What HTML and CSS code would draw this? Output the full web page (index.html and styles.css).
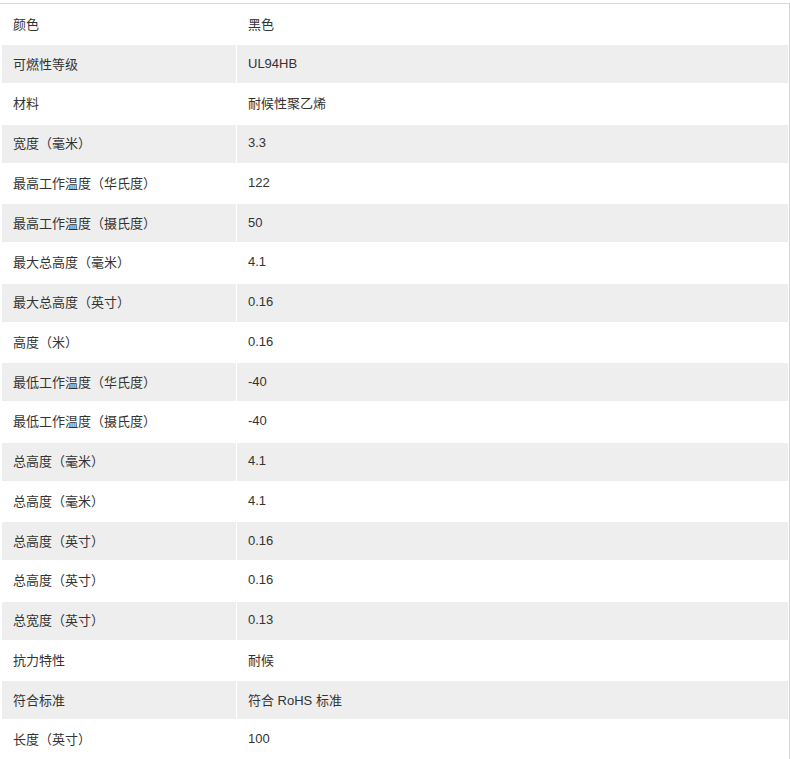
FILE: index.html
```html
<!DOCTYPE html>
<html lang="zh-CN">
<head>
<meta charset="utf-8">
<title>规格参数</title>
<link rel="stylesheet" href="styles.css">
</head>
<body>
<div class="sheet">
  <div class="row"><div class="cell">颜色</div><div class="cell">黑色</div></div>
  <div class="row"><div class="cell">可燃性等级</div><div class="cell">UL94HB</div></div>
  <div class="row"><div class="cell">材料</div><div class="cell">耐候性聚乙烯</div></div>
  <div class="row"><div class="cell">宽度（毫米）</div><div class="cell">3.3</div></div>
  <div class="row"><div class="cell">最高工作温度（华氏度）</div><div class="cell">122</div></div>
  <div class="row"><div class="cell">最高工作温度（摄氏度）</div><div class="cell">50</div></div>
  <div class="row"><div class="cell">最大总高度（毫米）</div><div class="cell">4.1</div></div>
  <div class="row"><div class="cell">最大总高度（英寸）</div><div class="cell">0.16</div></div>
  <div class="row"><div class="cell">高度（米）</div><div class="cell">0.16</div></div>
  <div class="row"><div class="cell">最低工作温度（华氏度）</div><div class="cell">-40</div></div>
  <div class="row"><div class="cell">最低工作温度（摄氏度）</div><div class="cell">-40</div></div>
  <div class="row"><div class="cell">总高度（毫米）</div><div class="cell">4.1</div></div>
  <div class="row"><div class="cell">总高度（毫米）</div><div class="cell">4.1</div></div>
  <div class="row"><div class="cell">总高度（英寸）</div><div class="cell">0.16</div></div>
  <div class="row"><div class="cell">总高度（英寸）</div><div class="cell">0.16</div></div>
  <div class="row"><div class="cell">总宽度（英寸）</div><div class="cell">0.13</div></div>
  <div class="row"><div class="cell">抗力特性</div><div class="cell">耐候</div></div>
  <div class="row"><div class="cell">符合标准</div><div class="cell">符合 RoHS 标准</div></div>
  <div class="row"><div class="cell">长度（英寸）</div><div class="cell">100</div></div>
</div>
</body>
</html>
```
FILE: styles.css
```css
html, body {
  margin: 0;
  padding: 0;
  background: #fff;
}
body {
  font-family: "Liberation Sans", Arial, "Noto Sans CJK SC", sans-serif;
  font-size: 13px;
  color: #333;
  overflow: hidden;
  text-spacing-trim: space-all;
}
.sheet {
  margin-top: 3px;
  width: 790px;
  box-sizing: border-box;
  border-top: 1px solid #d9d9d9;
  border-right: 1px solid #d4d4d4;
  padding: 1.25px 1.3px 0 2px;
  display: flex;
  flex-direction: column;
  gap: 1.75px;
}
.row {
  display: grid;
  grid-template-columns: 234px 1fr;
  column-gap: 1px;
  height: 38px;
}
.cell {
  display: flex;
  align-items: center;
  padding-left: 11px;
  padding-bottom: 2px;
  white-space: nowrap;
}
.row:nth-child(even) .cell {
  background: #eeeeee;
}
```
